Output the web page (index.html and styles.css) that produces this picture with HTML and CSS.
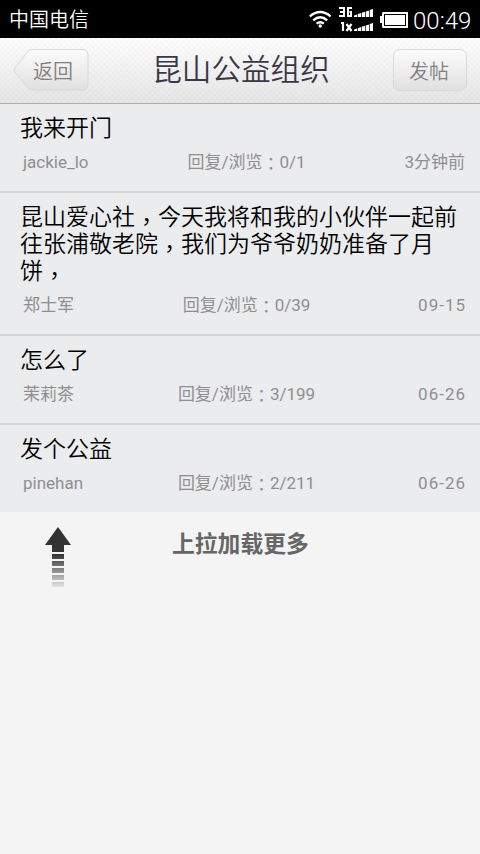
FILE: index.html
```html
<!DOCTYPE html>
<html lang="zh-CN">
<head>
<meta charset="utf-8">
<title>昆山公益组织</title>
<link rel="stylesheet" href="styles.css">
</head>
<body>
<div class="status">
  <span class="carrier">中国电信</span>
  <svg class="status-icons" width="102" height="38" viewBox="0 0 102 38">
    <g fill="none" stroke="#fff" stroke-width="2.400">
      <path d="M1.800 16.400Q12.200 7.800 22.600 16.400"/>
      <path d="M5.200 20.300Q12.200 14.200 19.200 20.300"/>
      <path d="M8.600 23.600Q12.200 20.700 15.800 23.600"/>
    </g>
    <circle cx="12.200" cy="26" r="1.700" fill="#fff"/>
    <g fill="none" stroke="#fff" stroke-width="2">
      <path d="M31 8H36V16H31M32 12H36M44 8H40V16H43V12H41.500"/>
      <path d="M33 23H35V31M38.500 24L43.500 31M43.500 24L38.500 31" stroke-width="2.200"/>
    </g>
    <g fill="#fff">
      <path d="M46 17V15.500L49 14.600V17ZM49.700 17V14.200L53 13V17ZM53.700 17V12.800L57 11.700V17ZM57.700 17V11.500L61 10.400V17ZM61.700 17V10L65 9V17Z"/>
      <path d="M46 31V29.500L49 28.600V31ZM49.700 31V28.200L53 27V31ZM53.700 31V26.800L57 25.700V31ZM57.700 31V25.500L61 24.400V31ZM61.700 31V24L65 23V31Z"/>
      <path d="M72 16h2v7h-2z"/>
      <path fill-rule="evenodd" d="M75 12H100V28H75L74 27V13ZM76 14V26H98V14Z"/>
      <rect x="77" y="15" width="20" height="10"/>
    </g>
  </svg>
  <span class="clock">00:49</span>
</div>
<header class="bar">
  <a class="btn back">
    <svg class="back-shape" width="76" height="44" viewBox="0 0 76 44">
      <defs><linearGradient id="face" x1="0" y1="0" x2="0" y2="1"><stop offset="0" stop-color="#fcfcfc"/><stop offset="1" stop-color="#e0e0e0"/></linearGradient></defs>
      <path d="M19 1.500H69Q75 1.500 75 7.500V36Q75 42 69 42H19Q16 42 14 39L2 24Q.7 22 2 20L14 4.500Q16 1.500 19 1.500Z" fill="url(#face)" stroke="#d8d8d8"/>
    </svg>
    <span class="back-label">返回</span>
  </a>
  <h1 class="title">昆山公益组织</h1>
  <a class="btn post">发帖</a>
</header>
<main>
  <ul class="list">
    <li class="topic">
      <p class="subject">我来开门</p>
      <div class="meta"><span class="author">jackie_lo</span><span class="count">回复/浏览<span class="mid" lang="zh-TW">：</span>0/1</span><span class="date">3分钟前</span></div>
    </li>
    <li class="topic">
      <p class="subject">昆山爱心社<span class="mid" lang="zh-TW">，</span>今天我将和我的小伙伴一起前<br>往张浦敬老院<span class="mid" lang="zh-TW">，</span>我们为爷爷奶奶准备了月<br>饼<span class="mid" lang="zh-TW">，</span></p>
      <div class="meta"><span class="author">郑士军</span><span class="count">回复/浏览<span class="mid" lang="zh-TW">：</span>0/39</span><span class="date day">09-15</span></div>
    </li>
    <li class="topic">
      <p class="subject">怎么了</p>
      <div class="meta"><span class="author">茉莉茶</span><span class="count">回复/浏览<span class="mid" lang="zh-TW">：</span>3/199</span><span class="date day">06-26</span></div>
    </li>
    <li class="topic">
      <p class="subject">发个公益</p>
      <div class="meta"><span class="author">pinehan</span><span class="count">回复/浏览<span class="mid" lang="zh-TW">：</span>2/211</span><span class="date day">06-26</span></div>
    </li>
  </ul>
  <div class="more">
    <svg class="arrow" width="28" height="62" viewBox="0 0 28 62">
      <defs><linearGradient id="fade" gradientUnits="userSpaceOnUse" x1="0" y1="27" x2="0" y2="63"><stop offset="0" stop-color="#333"/><stop offset="1" stop-color="#333" stop-opacity="0"/></linearGradient></defs>
      <path d="M14 0L27 18H20V25H8V18H1Z" fill="#333"/>
      <path d="M8 27h12v5H8zM8 34h12v5H8zM8 41h12v5H8zM8 48h12v5H8zM8 55h12v5H8z" fill="url(#fade)"/>
    </svg>
    <span class="more-text">上拉加载更多</span>
  </div>
</main>
</body>
</html>
```
FILE: styles.css
```css
* { box-sizing: border-box; margin: 0; padding: 0; }
body {
  min-height: 854px;
  background: #f4f4f4;
  font-family: Roboto, "Noto Sans CJK SC", sans-serif;
  font-weight: 350;
  color: #000;
}
.status {
  display: flex;
  height: 38px;
  padding: 0 8px 0 9px;
  background: #000;
  color: #fff;
}
.carrier { font-size: 20px; line-height: 40px; }
.status-icons { margin-left: auto; margin-right: 3px; }
.clock { width: 59px; font-size: 24px; line-height: 43px; font-weight: 300; white-space: nowrap; }
.bar {
  display: flex;
  justify-content: space-between;
  height: 66px;
  padding: 10px 13px 0 13px;
  border-bottom: 1px solid #adadad;
  background:
    repeating-linear-gradient(45deg, rgba(0,0,0,.012) 0 2px, transparent 2px 4px),
    repeating-linear-gradient(-45deg, rgba(0,0,0,.012) 0 2px, transparent 2px 4px),
    linear-gradient(#fff, #e6e6e6);
}
.btn { font-size: 20px; color: #808080; }
.back { position: relative; width: 76px; height: 44px; }
.back-shape { display: block; }
.back-label { position: absolute; left: 20px; top: 1px; line-height: 47px; }
.title { font-size: 29.6px; line-height: 44px; font-weight: 350; color: #3a3847; }
.post {
  width: 74px;
  height: 42px;
  margin-top: 1px;
  padding-right: 2px;
  border: 1px solid #d8d8d8;
  border-radius: 7px;
  background: linear-gradient(#fcfcfc, #e0e0e0);
  line-height: 44px;
  text-align: center;
}
.list { list-style: none; background: #ebecee; }
.topic { padding: 11px 15px 15px 20px; border-bottom: 2px solid #d2d3d5; }
.topic:last-child { border-bottom: 0; }
.subject { font-size: 23px; line-height: 27px; white-space: nowrap; }
.mid { position: relative; top: .2em; font-family: Roboto, "Noto Sans CJK TC", sans-serif; line-height: 0; }
.meta {
  display: flex;
  justify-content: space-between;
  height: 34px;
  padding-left: 3px;
  font-size: 17px;
  line-height: 40px;
  color: #8f8f8f;
  font-weight: 400;
}
.author { flex: 1; }
.count { padding-left: 5px; }
.count .mid { top: .13em; }
.date { flex: 1; text-align: right; }
.day { letter-spacing: 1px; margin-right: -1px; margin-left: 1px; }
.more { display: flex; padding: 15px 44px 0; }
.arrow { margin-right: 100px; }
.more-text { font-size: 22.8px; line-height: 36px; font-weight: 700; color: #666; }
```
